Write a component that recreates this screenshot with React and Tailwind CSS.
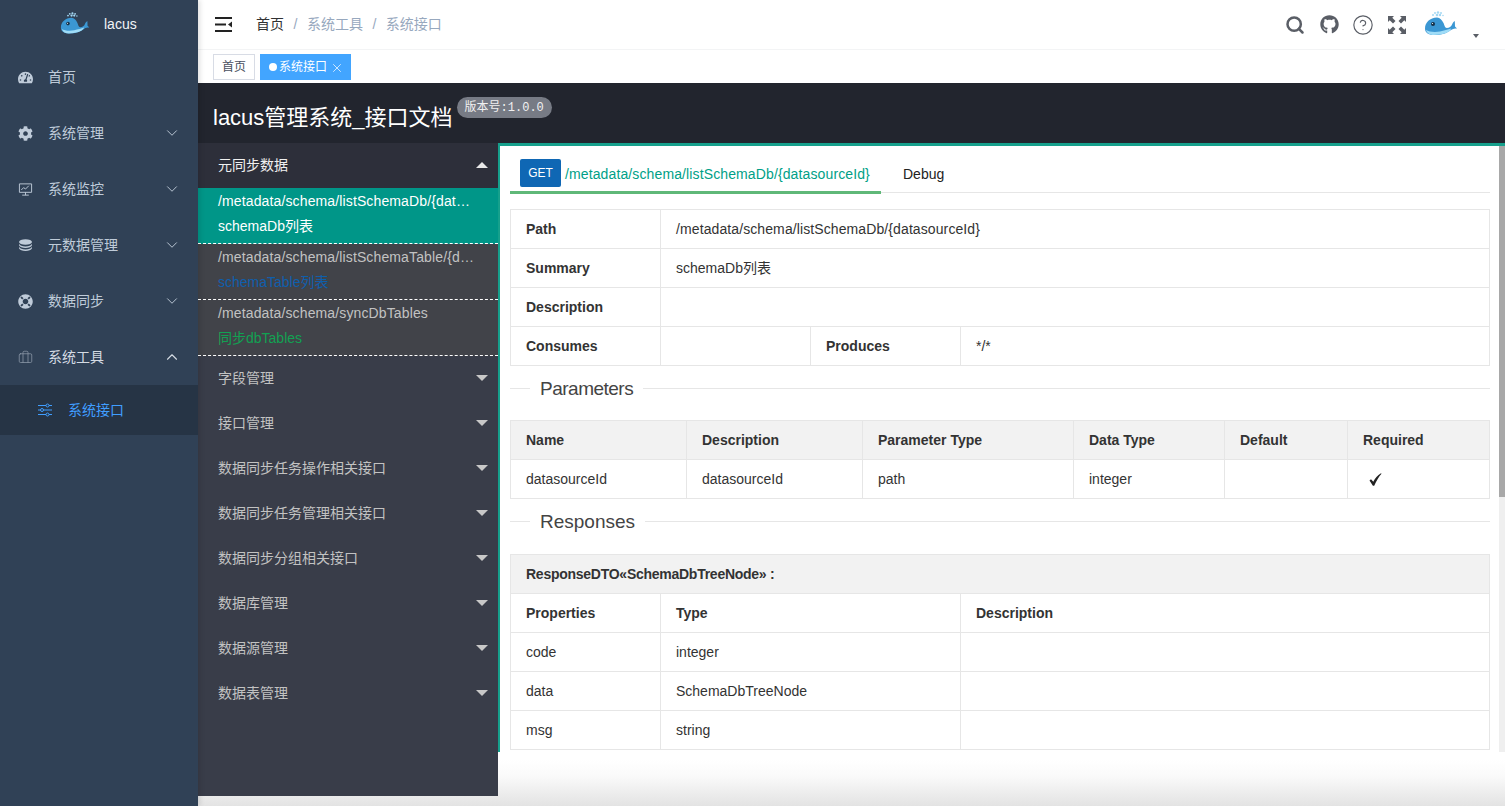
import { ChevronDown, ChevronUp, Search, CircleHelp, Briefcase, X } from "lucide-react";
import { FaGithub, FaCog, FaLifeRing, FaTachometerAlt } from "react-icons/fa";

const cn = "font-['Liberation_Sans','Noto_Sans_CJK_SC',sans-serif]";

// little whale logo
const Whale = ({ className }) => (
  <svg viewBox="0 0 36 28" className={className}>
    <g fill="#a5d8f3">
      <circle cx="11" cy="2" r="1" />
      <circle cx="14" cy="1.500" r="1.200" />
      <circle cx="17" cy="2" r="1" />
      <circle cx="9" cy="4" r="1" />
      <circle cx="13" cy="4" r="1.300" />
      <circle cx="16" cy="4" r="1.200" />
      <circle cx="19" cy="4.500" r="0.800" />
    </g>
    <path d="M13 6.500C6 6.500 1 11.500 1 17.500c0 4 3 6.500 9 6.500 8 0 13-2 17-5 2-1.500 4-1.500 6-1.500l-2-2-.2-5.500c-1.500 1-2.500 2.500-3 4-.5 1.500-2.500 3-5 3-2 0-2.300-3-3.300-5C18 9 16 6.500 13 6.500z" fill="#3b97d3" />
    <path d="M2 19c3 2 9 2.500 14 1.500 4-.8 8-2 11-3 0 1-1 2.500-3 3.500-4 2.200-9 3-14 3-4 0-7-1.500-8-5z" fill="#9fdcf7" />
    <circle cx="9" cy="13" r="2" fill="#16324a" />
    <circle cx="8.500" cy="12.500" r="0.600" fill="#fff" />
  </svg>
);

const Monitor = () => (
  <svg viewBox="0 0 16 16" className="w-[15px] h-[15px]" fill="none" stroke="currentColor" strokeWidth="1">
    <path d="M1.500 2h13v9h-13zM8 11v3M4.500 14h7" />
    <path d="M3.500 8.500l2.500-2.500 2 1.500 3.500-3.500" />
  </svg>
);

const Stack = () => (
  <svg viewBox="0 0 16 14" className="w-[15px] h-[13px]" fill="currentColor">
    <ellipse cx="8" cy="3.200" rx="7" ry="3" />
    <path d="M1 5.200c1 2 3.500 3 7 3s6-1 7-3v1.600c-1 2-3.500 3-7 3s-6-1-7-3z" />
    <path d="M1 8.400c1 2 3.500 3 7 3s6-1 7-3V10c-1 2-3.500 3-7 3s-6-1-7-3z" />
  </svg>
);

const Sliders = () => (
  <svg viewBox="0 0 14 14" className="w-[14px] h-[14px]" fill="none" stroke="currentColor" strokeWidth="1">
    <path d="M0 2.500h8M11 2.500h3M0 7h2.500M5.500 7H14M0 11.500h8M11 11.500h3" />
    <circle cx="9.500" cy="2.500" r="1.500" />
    <circle cx="4" cy="7" r="1.500" />
    <circle cx="9.500" cy="11.500" r="1.500" />
  </svg>
);

const Expand = () => (
  <svg viewBox="0 0 18 18" className="w-[18px] h-[18px]" fill="#5a5e66">
    <path d="M0 0h6L4.300 1.700 7.500 5 5 7.500 1.700 4.300 0 6zM18 0v6l-1.700-1.700L13 7.500 10.500 5l3.200-3.300L12 0zM0 18v-6l1.700 1.700L5 10.500 7.500 13l-3.200 3.300L6 18zM18 18h-6l1.700-1.700L10.500 13l2.500-2.500 3.300 3.200L18 12z" />
  </svg>
);

const Hamburger = () => (
  <svg viewBox="0 0 17 15" className="w-[17px] h-[15px]" fill="#222">
    <path d="M0 0h17v2H0zM0 13h17v2H0zM0 6.500h11v2H0zM17 4.500v6l-4-3z" />
  </svg>
);

const Caret = ({ up }) => (
  <span className={`w-0 h-0 border-x-[6px] border-x-transparent ${up ? "border-b-[6px] border-b-[#e8e8e8]" : "border-t-[6px] border-t-[#c8c8c8]"}`} />
);

const menu = [
  { label: "首页", icon: <FaTachometerAlt size={15} /> },
  { label: "系统管理", icon: <FaCog size={15} />, arrow: true },
  { label: "系统监控", icon: <Monitor />, arrow: true },
  { label: "元数据管理", icon: <Stack />, arrow: true },
  { label: "数据同步", icon: <FaLifeRing size={15} />, arrow: true },
];

const groups = ["字段管理", "接口管理", "数据同步任务操作相关接口", "数据同步任务管理相关接口", "数据同步分组相关接口", "数据库管理", "数据源管理", "数据表管理"];

const td = "border border-[#e6e6e6] px-[15px] h-[39px] text-left align-middle";
const th = `${td} font-bold`;

const Legend = ({ children, className = "" }) => (
  <div className={`flex items-center h-[33px] text-[19px] text-[#444] ${className}`}>
    <div className="w-5 h-px bg-[#e6e6e6]" />
    <span className="px-[10px]">{children}</span>
    <div className="flex-1 h-px bg-[#e6e6e6]" />
  </div>
);

const App = () => {
  return (
    <div className={`h-screen w-full flex overflow-hidden bg-white text-sm ${cn}`}>
      {/* Sidebar */}
      <aside className="w-[198px] shrink-0 bg-[#304156] text-[#bfcbd9] z-10 shadow-[2px_0_5px_rgba(0,0,0,0.12)]">
        <div className="h-[49px] flex items-center pl-[60px] gap-3">
          <Whale className="w-[32px] h-[25px]" />
          <span className="text-[#f2f4f6] text-[14px] font-normal -mt-[2px]">lacus</span>
        </div>
        {menu.map((m) => (
          <div key={m.label} className="h-14 flex items-center pl-[18px] pr-[17px]">
            <span className="w-[15px] flex justify-center">{m.icon}</span>
            <span className="ml-[15px] flex-1">{m.label}</span>
            {m.arrow && <ChevronDown size={18} strokeWidth={1.25} />}
          </div>
        ))}
        <div className="h-14 flex items-center pl-[18px] pr-[17px]">
          <Briefcase size={15} strokeWidth={1.25} className="text-[#8a97a6]" />
          <span className="ml-[15px] flex-1 text-[#d4dbe3]">系统工具</span>
          <ChevronUp size={18} strokeWidth={1.5} className="text-[#d4dbe3]" />
        </div>
        <div className="h-[50px] flex items-center pl-[38px] bg-[#263445] text-[#409eff]">
          <Sliders />
          <span className="ml-4">系统接口</span>
        </div>
      </aside>

      <div className="flex-1 min-w-0 flex flex-col">
        {/* Header */}
        <header className="h-[50px] shrink-0 flex items-center pl-[17px] pr-[26px] border-b border-[#f3f4f5]">
          <Hamburger />
          <nav className="ml-[24px] flex items-center text-[14px] -mt-[1px]">
            <span className="text-[#303133]">首页</span>
            <span className="mx-[9.5px] text-[#97a8be]">/</span>
            <span className="text-[#97a8be]">系统工具</span>
            <span className="mx-[9.5px] text-[#97a8be]">/</span>
            <span className="text-[#97a8be]">系统接口</span>
          </nav>
          <div className="ml-auto flex items-center text-[#5a5e66]">
            <Search size={20} strokeWidth={3} />
            <FaGithub size={19} className="ml-[15px]" />
            <CircleHelp size={22} strokeWidth={1.25} className="ml-[13px]" />
            <span className="ml-[14px] flex"><Expand /></span>
            <Whale className="ml-[18px] w-[36px] h-[28px]" />
            <span className="ml-[13px] mt-[22px] w-0 h-0 border-x-[3.5px] border-x-transparent border-t-[4px] border-t-[#5a5e66]" />
          </div>
        </header>

        {/* Tags */}
        <div className="h-[33px] shrink-0 flex items-start pl-[15px] pt-[4px] gap-[5px] text-[12px]">
          <span className="h-[26px] px-[8px] pt-[2px] flex items-center border border-[#d8dce5] text-[#495060]">首页</span>
          <span className="h-[26px] w-[91px] pl-[9px] flex items-center bg-[#42a5ff] text-white">
            <span className="w-2 h-2 rounded-full bg-white mr-[2px]" />
            <span className="pt-[2px]">系统接口</span>
            <X size={14} strokeWidth={1.25} className="ml-[3px] mt-[2px]" />
          </span>
        </div>

        {/* Doc header */}
        <div className="h-[60px] shrink-0 bg-[#22252e] flex pl-[15px] text-white">
          <h1 className="text-[22px] font-normal mt-[19px] leading-[32px]">lacus管理系统_接口文档</h1>
          <span className="ml-[4px] mt-[14px] h-[21px] px-[8px] rounded-full bg-[#777b85] text-[12px] leading-[23px] text-[#f0f0f0] font-['Liberation_Mono','Noto_Sans_CJK_SC',monospace]">版本号:1.0.0</span>
        </div>

        {/* Doc body */}
        <div className="flex-1 min-h-0 flex pb-[10px] bg-[linear-gradient(to_bottom,#fff_93%,#fafafa_95.500%,#eaeaea_98.600%,#e3e3e3_100%)]">
          <div className="w-[300px] shrink-0 bg-[#393d49] text-[#c2c2c2]">
            <div className="h-[45px] pl-5 pr-[10px] pb-[2px] flex items-center bg-[#2d2f3a] text-[#f0f0f0]">
              <span className="flex-1">元同步数据</span>
              <Caret up />
            </div>
            <div className="h-14 pl-5 pb-[5px] flex flex-col justify-center gap-[5px] leading-5 bg-[#009688] text-white border-b border-dashed border-white">
              <div className="whitespace-nowrap tracking-[0.13px]">/metadata/schema/listSchemaDb/{"{dat…"}</div>
              <div>schemaDb列表</div>
            </div>
            <div className="h-14 pl-5 pb-[5px] flex flex-col justify-center gap-[5px] leading-5 bg-[#414349] border-b border-dashed border-white">
              <div className="whitespace-nowrap tracking-[0.13px]">/metadata/schema/listSchemaTable/{"{d…"}</div>
              <div className="text-[#0f5fad]">schemaTable列表</div>
            </div>
            <div className="h-14 pl-5 pb-[5px] flex flex-col justify-center gap-[5px] leading-5 bg-[#414349] border-b border-dashed border-white">
              <div className="whitespace-nowrap tracking-[0.13px]">/metadata/schema/syncDbTables</div>
              <div className="text-[#12a152]">同步dbTables</div>
            </div>
            {groups.map((g) => (
              <div key={g} className="h-[45px] pl-5 pr-[10px] pb-[2px] flex items-center">
                <span className="flex-1">{g}</span>
                <Caret />
              </div>
            ))}
          </div>

          <div className="flex-1 min-w-0 flex flex-col">
            <div className="h-[609px] shrink-0 flex border-l-2 border-t-[3px] border-[#16a08c] bg-white overflow-hidden">
              <div className="flex-1 min-w-0 pl-[10px] pr-[9px] text-[#333]">
                {/* Tabs */}
                <div className="h-[47px] flex border-b border-[#e6e6e6]">
                  <div className="w-[371px] h-[48px] pl-[10px] pt-[13px] flex items-start border-b-[3px] border-[#5fb878]">
                    <span className="w-[41px] h-[28px] pt-[1px] flex items-center justify-center rounded-[2px] bg-[#0f67b4] text-white text-[12px]">GET</span>
                    <span className="ml-[4px] mt-[5px] text-[#009f87] tracking-[0.12px]">/metadata/schema/listSchemaDb/{"{datasourceId}"}</span>
                  </div>
                  <div className="ml-[22px] mt-[18px] text-[#222]">Debug</div>
                </div>

                <table className="mt-[16px] w-full border-collapse table-fixed">
                  <colgroup>
                    <col className="w-[150px]" />
                    <col className="w-[150px]" />
                    <col className="w-[150px]" />
                    <col />
                  </colgroup>
                  <tbody>
                    <tr>
                      <td className={th}>Path</td>
                      <td className={`${td} tracking-[0.1px]`} colSpan={3}>/metadata/schema/listSchemaDb/{"{datasourceId}"}</td>
                    </tr>
                    <tr>
                      <td className={th}>Summary</td>
                      <td className={td} colSpan={3}>schemaDb列表</td>
                    </tr>
                    <tr>
                      <td className={th}>Description</td>
                      <td className={td} colSpan={3}></td>
                    </tr>
                    <tr>
                      <td className={th}>Consumes</td>
                      <td className={td}></td>
                      <td className={th}>Produces</td>
                      <td className={td}>*/*</td>
                    </tr>
                  </tbody>
                </table>

                <div className="mt-[6px]"><Legend className="tracking-[-0.5px]">Parameters</Legend></div>

                <table className="mt-[15px] w-full border-collapse table-fixed">
                  <colgroup>
                    <col className="w-[176px]" />
                    <col className="w-[176px]" />
                    <col className="w-[211px]" />
                    <col className="w-[151px]" />
                    <col className="w-[123px]" />
                    <col />
                  </colgroup>
                  <tbody>
                    <tr className="bg-[#f2f2f2]">
                      {["Name", "Description", "Parameter Type", "Data Type", "Default", "Required"].map((h) => (
                        <td key={h} className={th}>{h}</td>
                      ))}
                    </tr>
                    <tr>
                      <td className={td}>datasourceId</td>
                      <td className={td}>datasourceId</td>
                      <td className={td}>path</td>
                      <td className={td}>integer</td>
                      <td className={td}></td>
                      <td className={td}>
                        <svg viewBox="0 0 13 13" className="ml-[6px] w-[13px] h-[13px]" fill="#222">
                          <path d="M0.500 7.500L2 6.300l2.300 2.500C6 5.500 8.500 2.500 12 0.300l.5.500C9.500 4 7.500 8 5.200 12.800h-1.300z" />
                        </svg>
                      </td>
                    </tr>
                  </tbody>
                </table>

                <div className="mt-[6px]"><Legend>Responses</Legend></div>

                <table className="mt-[16px] w-full border-collapse table-fixed">
                  <colgroup>
                    <col className="w-[150px]" />
                    <col className="w-[300px]" />
                    <col />
                  </colgroup>
                  <tbody>
                    <tr className="bg-[#f2f2f2]">
                      <td className={`${th} tracking-[-0.26px]`} colSpan={3}>ResponseDTO«SchemaDbTreeNode» :</td>
                    </tr>
                    <tr>
                      <td className={th}>Properties</td>
                      <td className={th}>Type</td>
                      <td className={th}>Description</td>
                    </tr>
                    <tr>
                      <td className={td}>code</td>
                      <td className={td}>integer</td>
                      <td className={td}></td>
                    </tr>
                    <tr>
                      <td className={td}>data</td>
                      <td className={td}>SchemaDbTreeNode</td>
                      <td className={td}></td>
                    </tr>
                    <tr>
                      <td className={td}>msg</td>
                      <td className={td}>string</td>
                      <td className={td}></td>
                    </tr>
                  </tbody>
                </table>
              </div>

              {/* Scrollbar */}
              <div className="w-[6px] shrink-0 bg-[#efefef]">
                <div className="h-[351px] bg-[#a8a8a8]" />
              </div>
            </div>
          </div>
        </div>
      </div>
    </div>
  );
};

export default App;
